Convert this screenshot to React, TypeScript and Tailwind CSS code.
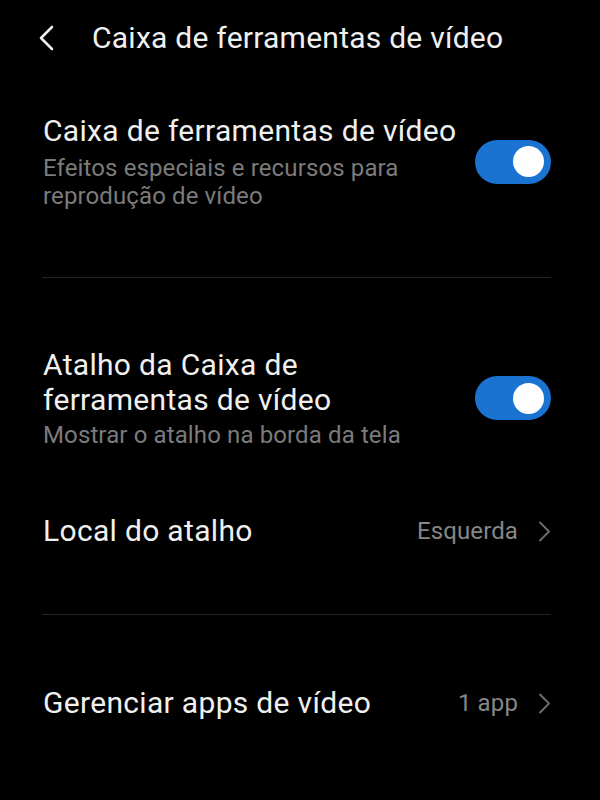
import React from "react";

function Toggle() {
  return (
    <div className="w-[76px] h-[44px] rounded-full bg-[#1a73d0] flex items-center justify-end pr-[7px] shrink-0">
      <div className="w-[31px] h-[31px] rounded-full bg-white" />
    </div>
  );
}

function Chevron() {
  return (
    <svg width="13" height="21" viewBox="0 0 13 21" fill="none" className="shrink-0">
      <path d="M2 1.5 L11 10.5 L2 19.5" stroke="#6f6f6f" strokeWidth="1.8" strokeLinecap="round" strokeLinejoin="round" />
    </svg>
  );
}

export default function App() {
  return (
    <div
      className="w-[600px] h-[800px] bg-black text-[#f0f0f0] overflow-hidden"
      style={{ fontFamily: "Roboto, 'Noto Sans', sans-serif" }}
    >
      <div className="h-[76px] flex items-center pl-[38px]">
        <svg width="16" height="26" viewBox="0 0 16 26" fill="none">
          <path d="M14 2 L3 13 L14 24" stroke="#f0f0f0" strokeWidth="2.6" strokeLinecap="round" strokeLinejoin="round" />
        </svg>
        <div className="ml-[38px] text-[30px] leading-[36px] tracking-[0.25px]">Caixa de ferramentas de vídeo</div>
      </div>

      <div className="mt-[37px] pl-[43px] pr-[49px] flex items-center justify-between">
        <div>
          <div className="text-[30px] leading-[36px] tracking-[0.32px] whitespace-nowrap">Caixa de ferramentas de vídeo</div>
          <div className="mt-[5px] text-[24px] leading-[28px] tracking-[0.12px] text-[#7b7b7b]">
            <div className="whitespace-nowrap">Efeitos especiais e recursos para</div>
            <div className="whitespace-nowrap">reprodução de vídeo</div>
          </div>
        </div>
        <Toggle />
      </div>

      <div className="mt-[67px] ml-[42px] mr-[49px] h-px bg-[#232323]" />

      <div className="mt-[69px] pl-[43px] pr-[49px] flex items-center justify-between">
        <div>
          <div className="text-[30px] leading-[35px] tracking-[0.32px]">
            <div className="whitespace-nowrap">Atalho da Caixa de</div>
            <div className="whitespace-nowrap">ferramentas de vídeo</div>
          </div>
          <div className="mt-[4px] text-[24px] leading-[28px] tracking-[0.12px] text-[#7b7b7b] whitespace-nowrap">
            Mostrar o atalho na borda da tela
          </div>
        </div>
        <Toggle />
      </div>

      <div className="mt-[64px] pl-[43px] pr-[49px] flex items-center justify-between">
        <div className="text-[30px] leading-[36px] tracking-[0.32px]">Local do atalho</div>
        <div className="flex items-center gap-[20px]">
          <span className="text-[24px] leading-[28px] tracking-[0.12px] text-[#868686]">Esquerda</span>
          <Chevron />
        </div>
      </div>

      <div className="mt-[65px] ml-[42px] mr-[49px] h-px bg-[#232323]" />

      <div className="mt-[70px] pl-[43px] pr-[49px] flex items-center justify-between">
        <div className="text-[30px] leading-[36px] tracking-[0.32px]">Gerenciar apps de vídeo</div>
        <div className="flex items-center gap-[20px]">
          <span className="text-[24px] leading-[28px] tracking-[0.12px] text-[#868686]">1 app</span>
          <Chevron />
        </div>
      </div>
    </div>
  );
}
